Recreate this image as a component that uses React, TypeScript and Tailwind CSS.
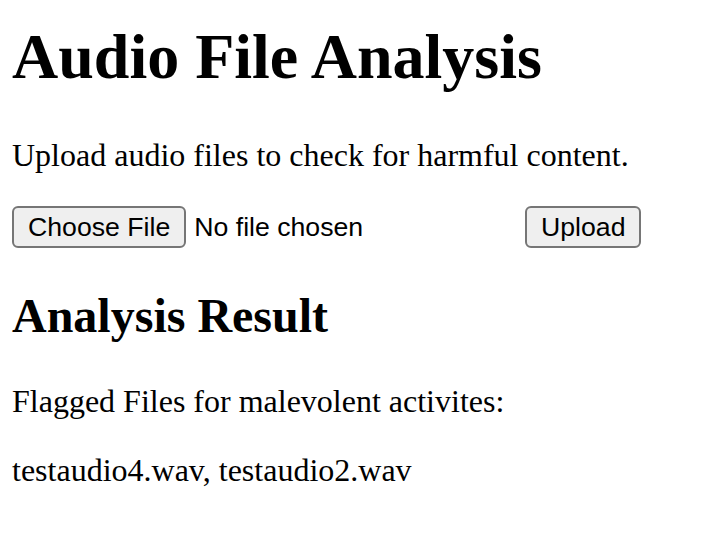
import { useState } from "react";

export default function App() {
  const [fileName, setFileName] = useState<string | null>(null);
  const flagged = ["testaudio4.wav", "testaudio2.wav"];

  return (
    <div className="min-h-screen bg-white px-[12px] pt-[20px] text-black font-['Liberation_Serif',serif]">
      <h1 className="m-0 mb-[43px] text-[64px] font-bold leading-[normal]">
        Audio File Analysis
      </h1>
      <p className="m-0 mb-[32px] text-[32px] leading-[normal]">
        Upload audio files to check for harmful content.
      </p>

      {/* File picker + upload */}
      <form
        className="flex h-[42px] items-center font-['Liberation_Sans',Arial,sans-serif] text-[26.67px]"
        onSubmit={(e) => e.preventDefault()}
      >
        <label className="flex w-[505px] items-center">
          <span className="flex h-[42px] items-center rounded-[6px] border-2 border-[#767676] bg-[#efefef] px-[14px] leading-none">
            Choose File
          </span>
          <span className="ml-[8px] leading-none">
            {fileName ?? "No file chosen"}
          </span>
          <input
            type="file"
            accept="audio/*"
            className="hidden"
            onChange={(e) => setFileName(e.target.files?.[0]?.name ?? null)}
          />
        </label>
        <button
          type="submit"
          className="ml-[8px] flex h-[42px] items-center rounded-[6px] border-2 border-[#767676] bg-[#efefef] px-[14px] leading-none"
        >
          Upload
        </button>
      </form>

      <h2 className="m-0 mt-[40px] mb-[40px] text-[48px] font-bold leading-[normal]">
        Analysis Result
      </h2>
      <p className="m-0 mb-[32px] text-[32px] leading-[normal]">
        Flagged Files for malevolent activites:
      </p>
      <p className="m-0 text-[32px] leading-[normal]">{flagged.join(", ")}</p>
    </div>
  );
}
